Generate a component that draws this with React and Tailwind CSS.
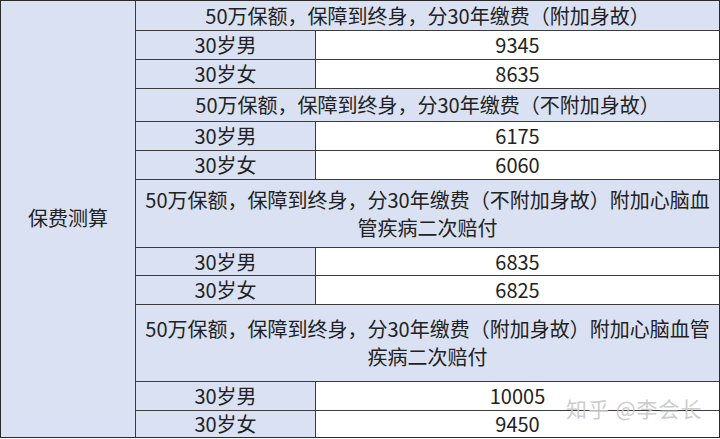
const font = { fontFamily: '"Noto Sans CJK SC", "Noto Sans", sans-serif' };

const Header = ({ h, lines, last }) => (
  <div
    className={`flex flex-col items-center justify-center text-center leading-[28px] whitespace-nowrap ${last ? '' : 'border-b border-[#3c3c3c]'}`}
    style={{ height: h }}
  >
    {lines.map((l, i) => (
      <span key={i}>{l}</span>
    ))}
  </div>
);

const Pair = ({ h, label, value, last }) => (
  <div className={`flex ${last ? '' : 'border-b border-[#3c3c3c]'}`} style={{ height: h }}>
    <div className="w-[180px] shrink-0 flex items-center justify-center border-r border-[#3c3c3c]">{label}</div>
    <div className="flex-1 flex items-center justify-center bg-white">{value}</div>
  </div>
);

export default function App() {
  return (
    <div className="w-[720px] h-[439px] bg-white relative overflow-hidden" style={font}>
      <div className="w-[720px] h-[438px] flex border border-[#2a2a2a] bg-[#d9e1f2] text-[20px] text-[#222]">
        <div className="w-[135px] shrink-0 flex items-center justify-center border-r border-[#3c3c3c] pb-[2px]">
          保费测算
        </div>
        <div className="flex-1 flex flex-col">
          <Header h={30} lines={['50万保额，保障到终身，分30年缴费（附加身故）']} />
          <Pair h={29} label="30岁男" value="9345" />
          <Pair h={29} label="30岁女" value="8635" />
          <Header h={33} lines={['50万保额，保障到终身，分30年缴费（不附加身故）']} />
          <Pair h={29} label="30岁男" value="6175" />
          <Pair h={29} label="30岁女" value="6060" />
          <Header
            h={68}
            lines={['50万保额，保障到终身，分30年缴费（不附加身故）附加心脑血', '管疾病二次赔付']}
          />
          <Pair h={28} label="30岁男" value="6835" />
          <Pair h={29} label="30岁女" value="6825" />
          <Header
            h={77}
            lines={['50万保额，保障到终身，分30年缴费（附加身故）附加心脑血管', '疾病二次赔付']}
          />
          <Pair h={29} label="30岁男" value="10005" />
          <Pair h={26} label="30岁女" value="9450" last />
        </div>
      </div>
      <div className="absolute left-[566px] top-[393px] text-[21px] text-[#c8c8c8] opacity-90 whitespace-nowrap tracking-[1px]">
        知乎 @李会长
      </div>
    </div>
  );
}
